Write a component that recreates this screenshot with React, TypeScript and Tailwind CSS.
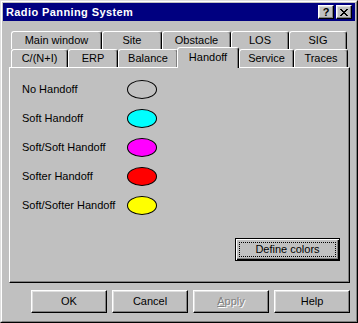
import React from "react";

const tabBase =
  "h-[18px] flex items-center justify-center border-l border-t border-r border-l-white border-t-white border-r-black rounded-t-[3px] shadow-[inset_-1px_0_0_#808080] whitespace-nowrap";

const btnBevel =
  "border border-t-white border-l-white border-r-black border-b-black shadow-[inset_-1px_-1px_0_#808080,inset_1px_1px_0_#dfdfdf] bg-[#c0c0c0]";

function Ellipse({ color }: { color: string }) {
  return <div className={"w-[30px] h-[19px] rounded-[50%] border border-black " + color} />;
}

const rows: { label: string; color: string }[] = [
  { label: "No Handoff", color: "bg-[#c0c0c0]" },
  { label: "Soft Handoff", color: "bg-[#00ffff]" },
  { label: "Soft/Soft Handoff", color: "bg-[#ff00ff]" },
  { label: "Softer Handoff", color: "bg-[#ff0000]" },
  { label: "Soft/Softer Handoff", color: "bg-[#ffff00]" },
];

export default function App() {
  return (
    <div className="w-[358px] h-[323px] bg-[#c0c0c0] border border-t-[#dfdfdf] border-l-[#dfdfdf] border-r-black border-b-black font-['Liberation_Sans',Arial,sans-serif] text-[11px] text-black leading-none select-none">
      <div className="h-full border border-t-white border-l-white border-r-[#808080] border-b-[#808080] p-px flex flex-col">
        {/* Title bar */}
        <div className="h-[18px] bg-[#000080] flex items-center justify-between pl-[3px] pr-[3px]">
          <span className="text-white font-bold text-[11px] tracking-[0.4px]">Radio Panning System</span>
          <div className="flex gap-[2px]">
            <div className={"w-[16px] h-[14px] flex items-center justify-center " + btnBevel}>
              <span className="font-bold text-[11px] leading-none mt-px">?</span>
            </div>
            <div className={"w-[16px] h-[14px] flex items-center justify-center " + btnBevel}>
              <svg width="8" height="7" viewBox="0 0 8 7" shapeRendering="crispEdges">
                <path d="M0 0h2v1h-2zM6 0h2v1h-2zM1 1h2v1h-2zM5 1h2v1h-2zM2 2h4v1h-4zM3 3h2v1h-2zM2 4h4v1h-4zM1 5h2v1h-2zM5 5h2v1h-2zM0 6h2v1h-2zM6 6h2v1h-2z" fill="#000" />
              </svg>
            </div>
          </div>
        </div>

        {/* Body */}
        <div className="mt-[10px] pl-[6px] pr-[5px] flex flex-col">
          {/* Tab row 1 */}
          <div className="flex ml-[2px] h-[18px]">
            <div className={tabBase + " w-[91px]"}>Main window</div>
            <div className={tabBase + " w-[60px]"}>Site</div>
            <div className={tabBase + " w-[69px]"}>Obstacle</div>
            <div className={tabBase + " w-[58px]"}>LOS</div>
            <div className={tabBase + " w-[58px]"}>SIG</div>
          </div>
          {/* Tab row 2 */}
          <div className="flex ml-[2px] h-[18px] relative z-10">
            <div className={tabBase + " w-[57px]"}>C/(N+I)</div>
            <div className={tabBase + " w-[50px]"}>ERP</div>
            <div className={tabBase + " w-[60px]"}>Balance</div>
            <div className="w-[61px] h-[18px]">
              <div className="-ml-px -mt-[2px] w-[62px] h-[21px] bg-[#c0c0c0] flex items-center justify-center border-l border-t border-r border-l-white border-t-white border-r-black rounded-t-[3px] shadow-[inset_-1px_0_0_#808080] pb-[2px]">
                Handoff
              </div>
            </div>
            <div className={tabBase + " w-[55px]"}>Service</div>
            <div className={tabBase + " w-[54px]"}>Traces</div>
          </div>
          {/* Panel */}
          <div className="h-[216px] border border-t-white border-l-white border-r-black border-b-black shadow-[inset_-1px_-1px_0_#808080] flex flex-col pl-[12px] pt-[12px] pr-[9px]">
            <div className="flex flex-col gap-[10px]">
              {rows.map((r) => (
                <div key={r.label} className="flex items-center h-[19px]">
                  <span className="w-[105px]">{r.label}</span>
                  <Ellipse color={r.color} />
                </div>
              ))}
            </div>
            <div className="flex justify-end mt-[23px]">
              <div className="w-[105px] h-[23px] border border-black shadow-[inset_1px_1px_0_#ffffff,inset_-1px_-1px_0_#000000,inset_-2px_-2px_0_#808080] p-[3px]">
                <div className="h-full border border-dotted border-black flex items-center justify-center">
                  Define colors
                </div>
              </div>
            </div>
          </div>
          {/* Buttons */}
          <div className="flex justify-end gap-[5px] mt-[7px]">
            <div className={"w-[76px] h-[23px] flex items-center justify-center " + btnBevel}>OK</div>
            <div className={"w-[76px] h-[23px] flex items-center justify-center " + btnBevel}>Cancel</div>
            <div className={"w-[76px] h-[23px] flex items-center justify-center text-[#808080] [text-shadow:1px_1px_0_#ffffff] " + btnBevel}>
              <span>
                <u>A</u>pply
              </span>
            </div>
            <div className={"w-[76px] h-[23px] flex items-center justify-center " + btnBevel}>Help</div>
          </div>
        </div>
      </div>
    </div>
  );
}
